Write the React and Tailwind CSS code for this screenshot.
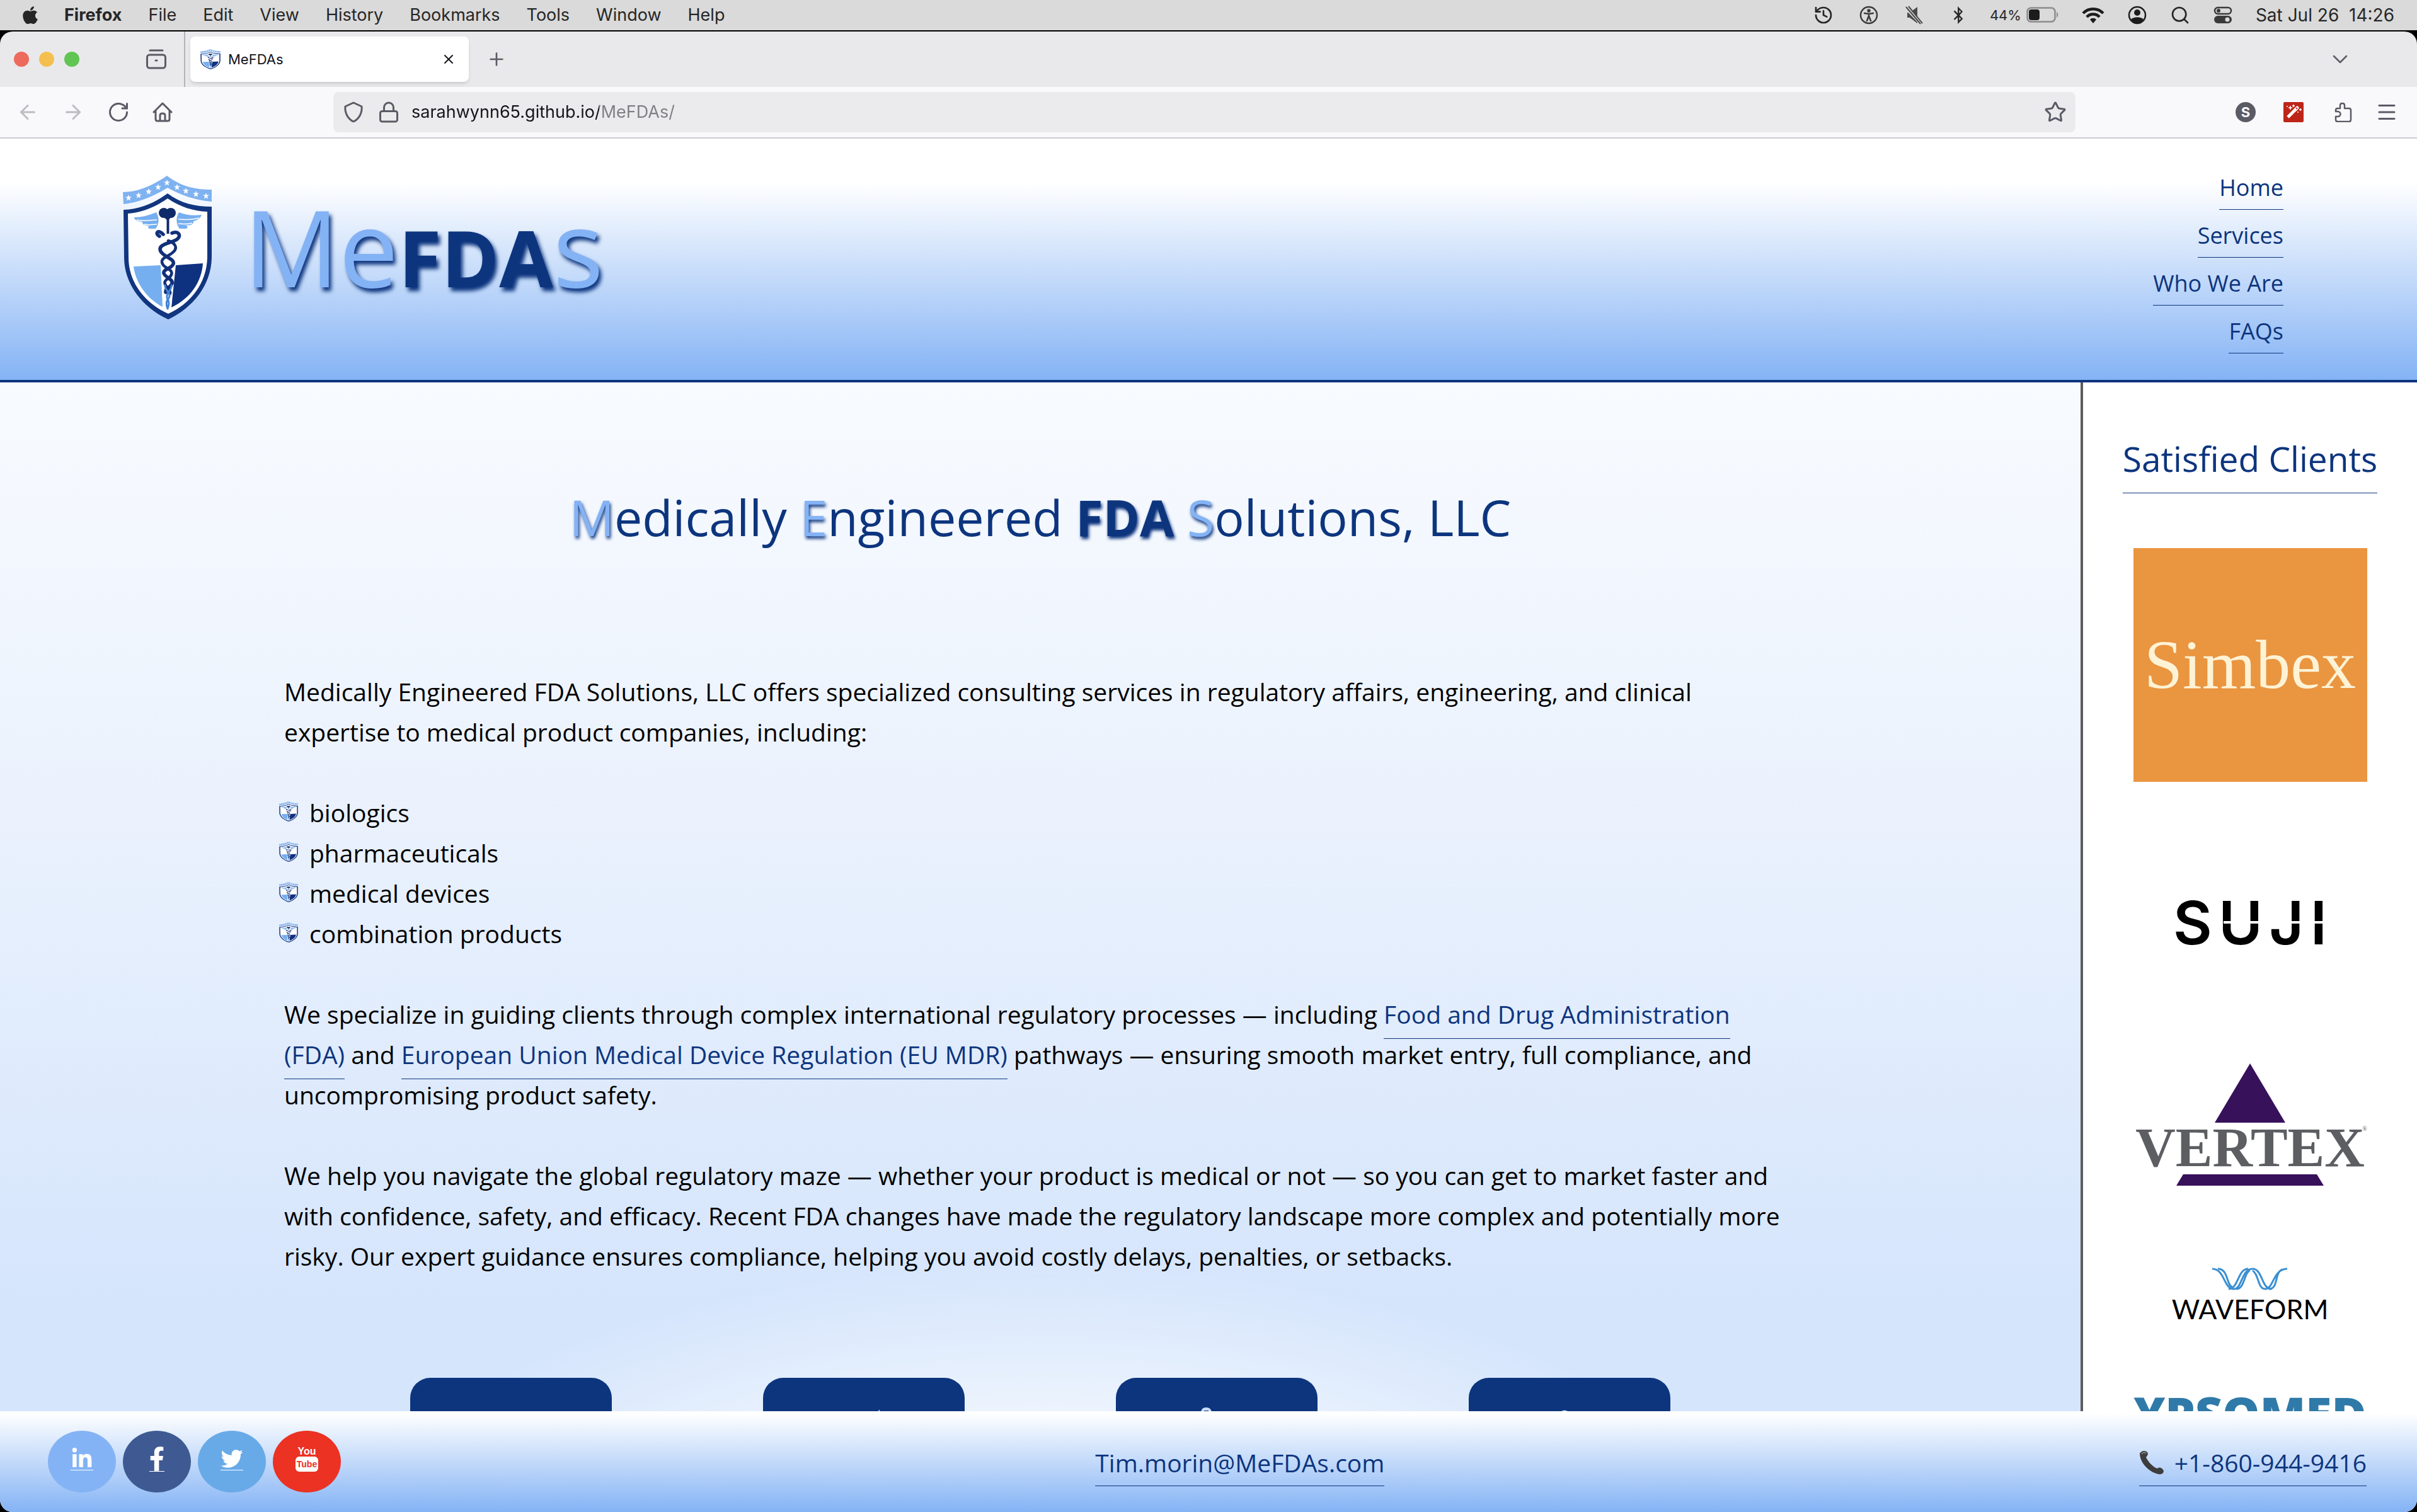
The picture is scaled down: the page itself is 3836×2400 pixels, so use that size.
import React from "react";
import { FaApple, FaLinkedinIn, FaFacebookF, FaTwitter, FaBluetoothB } from "react-icons/fa";
import { History, Search, X, Plus, ChevronDown, ArrowLeft, ArrowRight, RotateCw, Lock, Star, Menu } from "lucide-react";

const STARS = [[9, 35], [25, 31], [41, 25], [56, 18], [70, 11], [86, 18], [100, 24], [116, 29], [132, 32]];

function Crest({ className }) {
  return (
    <svg className={className} viewBox="0 0 142 228" preserveAspectRatio="none" aria-hidden="true">
      <path d="M0 26C25 26 48 15 70 0C92 17 115 22 141 22V41C115 39 90 30 71 19C50 32 25 43 1 45Z" fill="#7fb2f0" />
      {STARS.map(([x, y]) => (
        <path key={x} transform={`translate(${x} ${y})`} d="M0-5L1.3-1.6L5-1.6L2 .8L3.1 4.6L0 2.4L-3.1 4.6L-2 .8L-5-1.6L-1.3-1.6Z" fill="#fff" />
      ))}
      <path d="M1 54C28 53 50 43 71 28C92 44 115 49 141 49V130C140 175 110 210 72 228C32 210 2 172 2 130Z" fill="#12357f" />
      <path d="M8 60C32 58 52 49 71 36C92 50 112 56 134 57V130C133 170 108 203 72 219C36 203 9 170 9 130Z" fill="#fff" />
      <path d="M17 144L60 142L63 208C36 194 20 168 17 144Z" fill="#76aff0" />
      <path d="M84 142L127 139C125 168 108 194 77 209Z" fill="#0f3280" />
      <path d="M18 66C32 66 42 62 53 58C58 66 58 76 52 84H42C39 82 40 79 43 79C34 80 30 76 31 73C24 73 18 70 18 66Z" fill="#76aff0" />
      <path d="M125 62C110 64 100 62 89 58C84 66 84 76 90 84H101C104 81 102 79 99 78C108 80 113 76 112 72C119 71 124 66 125 62Z" fill="#76aff0" />
      <path d="M22 70C36 73 46 70 54 70M34 77C44 79 50 77 54 77M121 67C107 71 96 69 88 69M110 75C100 78 94 76 88 76" stroke="#fff" strokeWidth="1.5" fill="none" />
      <circle cx="65" cy="59" r="8" fill="#0f2a68" />
      <circle cx="76" cy="59" r="8" fill="#0f2a68" />
      <path d="M63 64L71 71L79 64Z" fill="#0f2a68" />
      <path d="M71.500 66V92" stroke="#0f2a68" strokeWidth="4" />
      <path d="M65 208L62 140L70 120L80 140L77 209L71 213Z" fill="#fff" />
      <path d="M64 93C56 84 50 92 58 96M78 91C88 86 96 97 82 103C70 108 55 110 60 120C66 130 83 132 80 140C77 148 63 148 65 155C68 162 80 164 78 171C75 178 67 178 68 185" stroke="#12307a" strokeWidth="5.500" fill="none" strokeLinecap="round" />
      <path d="M72 103C82 106 88 114 80 121C72 129 58 130 63 140C67 148 80 148 77 157C74 164 64 165 67 172C69 178 76 180 75 187" stroke="#12307a" strokeWidth="4.500" fill="none" strokeLinecap="round" />
      <path d="M67 174C66 182 78 186 73 194C68 199 68 204 71 211M77 174C78 182 66 188 71 196C74 200 73 206 71 211" stroke="#3f83d6" strokeWidth="3" fill="none" strokeLinecap="round" />
    </svg>
  );
}

function MenuBar() {
  const items = ["File", "Edit", "View", "History", "Bookmarks", "Tools", "Window", "Help"];
  return (
    <div className="flex h-12 shrink-0 items-center justify-between bg-[#dadada] pr-9 pl-8 text-[27px] text-[#262626]">
      <div className="flex items-center gap-[42px]">
        <FaApple className="size-8 shrink-0" />
        <button className="-ml-1 font-bold">Firefox</button>
        {items.map((t) => (
          <button key={t}>{t}</button>
        ))}
      </div>
      <div className="flex items-center">
        <History className="mr-10 size-8" />
        <svg className="mr-10 size-8" viewBox="0 0 32 32" fill="none" stroke="#3a3a3a" strokeWidth="2.500" strokeLinecap="round">
          <circle cx="16" cy="16" r="13" />
          <circle cx="16" cy="9" r="1.500" fill="#3a3a3a" />
          <path d="M9 13L16 14L23 13M16 14V18M16 17L13 25M16 17L19 25" />
        </svg>
        <svg className="mr-10 size-8" viewBox="0 0 32 32" fill="#4a4a4a">
          <path d="M5 12H9L21 3V29L9 20H5Z" />
          <path d="M2 3L29 31" stroke="#dadada" strokeWidth="6" />
          <path d="M3 3L26 30M7 2L29 29" stroke="#4a4a4a" strokeWidth="2" />
        </svg>
        <FaBluetoothB className="mr-9 size-7" />
        <span className="mr-2 text-[22px]">44%</span>
        <svg className="mr-9 h-7 w-[52px]" viewBox="0 0 52 28">
          <rect x="1.500" y="2.500" width="44" height="22" rx="6" fill="none" stroke="#8c8c8c" strokeWidth="2.500" />
          <rect x="4" y="5" width="17" height="17" rx="4" fill="#1c1c1c" />
          <path d="M48 9V18C51 17 51 10 48 9Z" fill="#8c8c8c" />
        </svg>
        <svg className="mr-9 h-7 w-9" viewBox="0 0 36 28" fill="none" stroke="#1c1c1c" strokeWidth="4.500">
          <path d="M2 11C11 2 25 2 34 11" />
          <path d="M8 17C13 11 23 11 28 17" />
          <path d="M13 21C16 18 20 18 23 21L18 27Z" fill="#1c1c1c" stroke="none" />
        </svg>
        <svg className="mr-9 size-8" viewBox="0 0 32 32">
          <circle cx="16" cy="16" r="13" fill="none" stroke="#1c1c1c" strokeWidth="2.500" />
          <circle cx="16" cy="12" r="5" fill="#1c1c1c" />
          <path d="M6 23C10 18 22 18 26 23C22 30 10 30 6 23Z" fill="#1c1c1c" />
        </svg>
        <Search className="mr-9 size-8" />
        <svg className="mr-9 size-8" viewBox="0 0 32 32">
          <rect x="3" y="4" width="26" height="10" rx="5" fill="none" stroke="#3a3a3a" strokeWidth="2.500" />
          <circle cx="9" cy="9" r="3" fill="#3a3a3a" />
          <rect x="2" y="17" width="28" height="12" rx="6" fill="#3a3a3a" />
          <circle cx="23" cy="23" r="3.500" fill="#dadada" />
        </svg>
        <span className="text-[28px] whitespace-pre">Sat Jul 26  14:26</span>
      </div>
    </div>
  );
}

function TabBar() {
  return (
    <div className="flex h-22 items-center rounded-t-[20px] bg-[#e9e9eb] pl-[22px]">
      <div className="flex gap-4">
        <button aria-label="Close window" className="size-6 rounded-full bg-[#ed6a5e]" />
        <button aria-label="Minimise window" className="size-6 rounded-full bg-[#f5bf4f]" />
        <button aria-label="Zoom window" className="size-6 rounded-full bg-[#61c554]" />
      </div>
      <button aria-label="Recent browsing" className="ml-[104px]">
        <svg className="h-8 w-9" viewBox="0 0 36 32" fill="none" stroke="#5b5b66" strokeWidth="3" strokeLinecap="round">
          <rect x="3.500" y="9" width="29" height="21" rx="4" />
          <path d="M8 2H28M17 18H19" />
        </svg>
      </button>
      <div className="ml-[26px] h-full w-0.5 bg-[#b4b4b8]" />
      <div className="ml-2 flex h-[72px] w-[442px] items-center rounded-lg bg-white pr-5 pl-4 shadow-md">
        <Crest className="h-8 w-8" />
        <span className="ml-3 flex-1 text-[22px] text-[#15141a]">MeFDAs</span>
        <button aria-label="Close tab">
          <X className="size-6 text-[#15141a]" />
        </button>
      </div>
      <button aria-label="New tab" className="ml-7">
        <Plus className="size-8 text-[#5b5b66]" strokeWidth={2} />
      </button>
      <button aria-label="List all tabs" className="mr-[102px] ml-auto">
        <ChevronDown className="size-10 text-[#5b5b66]" strokeWidth={1.5} />
      </button>
    </div>
  );
}

function Toolbar() {
  return (
    <div className="flex h-[82px] items-center border-b-2 border-[#ccccd0] bg-[#f9f9fb] pr-[30px] pl-[26px] text-[#5b5b66]">
      <button aria-label="Back"><ArrowLeft className="size-9 text-[#bdbdc1]" strokeWidth={2} /></button>
      <button aria-label="Forward" className="ml-9"><ArrowRight className="size-9 text-[#bdbdc1]" strokeWidth={2} /></button>
      <button aria-label="Reload" className="ml-9"><RotateCw className="size-9" strokeWidth={2} /></button>
      <button aria-label="Home" className="ml-[34px]">
        <svg className="size-9" viewBox="0 0 36 36" fill="none" stroke="currentColor" strokeWidth="3" strokeLinejoin="round" strokeLinecap="round">
          <path d="M4 18L18 4L32 18M7 16V29Q7 32 10 32H26Q29 32 29 29V16M14 32V23Q14 20 18 20Q22 20 22 23V32" />
        </svg>
      </button>
      <div className="ml-[253px] flex h-16 flex-1 items-center rounded-lg bg-[#ebebed] pr-3.5 pl-3.5">
        <svg className="size-9" viewBox="0 0 36 36" fill="none" stroke="currentColor" strokeWidth="3" strokeLinejoin="round">
          <path d="M18 3L31 9C32 19 27 29 18 33C9 29 4 19 5 9Z" />
        </svg>
        <Lock className="ml-5 size-9" strokeWidth={2} />
        <input
          aria-label="Address"
          defaultValue="sarahwynn65.github.io/MeFDAs/"
          className="ml-[18px] min-w-0 flex-1 bg-[linear-gradient(to_right,#15141a_298px,#7f7f83_298px)] bg-clip-text text-[27px] text-transparent outline-none"
        />
        <button aria-label="Bookmark this page"><Star className="size-9" strokeWidth={2} /></button>
      </div>
      <button aria-label="Account" className="ml-[254px] grid size-8 place-items-center rounded-full bg-[#5b5b66] text-[22px] font-bold text-[#f9f9fb]">S</button>
      <button aria-label="Wand" className="ml-11 rounded-xs bg-[#bd2519]">
        <svg className="size-8" viewBox="0 0 32 32" fill="none" stroke="#fff">
          <path d="M7 24L21 10" strokeWidth="5" strokeLinecap="butt" />
          <path d="M19 12L22 9" strokeWidth="5" strokeLinecap="round" />
          <path d="M20 11L22 9" stroke="#bd2519" strokeWidth="2" />
          <path d="M11 6V12M8 9H14M16 4V8M14 6H18M27 10V14M25 12H29M6 6V8M23 15V17" strokeWidth="1.500" />
        </svg>
      </button>
      <button aria-label="Extensions" className="ml-[46px]">
        <svg className="size-8" viewBox="0 0 32 32" fill="none" stroke="currentColor" strokeWidth="2.500" strokeLinejoin="round">
          <path d="M12 10V5C12 1 19 1 19 5V10H26Q29 10 29 13V28Q29 31 26 31H8Q5 31 5 28V23H8C14 23 14 15 8 15H5V13Q5 10 8 10Z" />
        </svg>
      </button>
      <button aria-label="Open menu" className="ml-9"><Menu className="size-9" strokeWidth={2} /></button>
    </div>
  );
}

const LINK = "border-b border-[#0d357e] text-[#0d357e]";
const GLOW = "text-[#84b3f5] [text-shadow:2px_4px_5px_#0d357e]";

function SiteHeader() {
  return (
    <header className="flex h-[387px] shrink-0 justify-between border-b-4 border-[#0d357e] bg-[linear-gradient(#ffffff_18%,#84b3f5)] pr-[212px] pl-[195px]">
      <a href="#home" className="mt-[59px] flex items-start gap-[50px]">
        <Crest className="h-[228px] w-[142px]" />
        <span className="text-[168px] leading-[224px] whitespace-nowrap text-[#84b3f5] [text-shadow:4px_6px_6px_#0d357e]">
          Me<b className="text-[124px] text-[#0d357e]">FDA</b>s
        </span>
      </a>
      <nav className="mt-12 flex flex-col items-end gap-[11px] text-[36px]">
        {["Home", "Services", "Who We Are", "FAQs"].map((t) => (
          <a key={t} href="#nav" className={`${LINK} pb-1 leading-[60px]`}>{t}</a>
        ))}
      </nav>
    </header>
  );
}

const CARD_ICONS = [
  null,
  <path key="pen" d="M184 50L190 62L208 140L160 140Z" />,
  <path key="clip" fillRule="evenodd" d="M135 56Q135 47 143 47Q152 47 152 56V62H200V160H112V62H135ZM140 52V62H147V52Z" />,
  <path key="search" d="M147 53Q152 50 157 53L200 90V160H112V90Z" />,
];

function Intro() {
  return (
    <main className="flex flex-1 flex-col items-center overflow-hidden bg-[linear-gradient(#f8fbff,#ebf2fd_40%,#d5e5fc_90%)]">
      <h1 className="mt-[159px] text-[79px] leading-[110px] whitespace-nowrap text-[#0d357e]">
        <span className={GLOW}>M</span>edically <span className={GLOW}>E</span>ngineered{" "}
        <b className="[text-shadow:2px_4px_5px_#0d357e]">FDA</b> <span className={GLOW}>S</span>olutions, LLC
      </h1>
      <div className="mt-[190px] w-[2400px] max-w-full text-[39px] leading-16 text-black">
        <p>
          Medically Engineered FDA Solutions, LLC offers specialized consulting services in regulatory affairs, engineering, and clinical
          <br />
          expertise to medical product companies, including:
        </p>
        <ul className="my-16 -ml-2">
          {["biologics", "pharmaceuticals", "medical devices", "combination products"].map((t) => (
            <li key={t} className="flex items-center gap-[18px]">
              <Crest className="-mt-1 h-8 w-[30px]" />
              {t}
            </li>
          ))}
        </ul>
        <p>
          We specialize in guiding clients through complex international regulatory processes — including{" "}
          <a href="#fda" className={`${LINK} pb-3`}>Food and Drug Administration<br />(FDA)</a> and{" "}
          <a href="#mdr" className={`${LINK} pb-3`}>European Union Medical Device Regulation (EU MDR)</a> pathways — ensuring smooth market entry, full compliance, and
          <br />
          uncompromising product safety.
        </p>
        <p className="mt-16">
          We help you navigate the global regulatory maze — whether your product is medical or not — so you can get to market faster and
          <br />
          with confidence, safety, and efficacy. Recent FDA changes have made the regulatory landscape more complex and potentially more
          <br />
          risky. Our expert guidance ensures compliance, helping you avoid costly delays, penalties, or setbacks.
        </p>
      </div>
      <div className="-mt-6 flex h-[1150px] w-[2400px] max-w-full shrink-0 justify-center gap-60 bg-[radial-gradient(closest-side,#ffffff_25%,#ffffff00)] pt-[185px]">
        {CARD_ICONS.map((icon, i) => (
          <div key={i} className="h-80 w-80 rounded-[32px] bg-[#0d357e]">
            <svg className="size-80" viewBox="0 0 320 320" fill="#c9dcf8">{icon}</svg>
          </div>
        ))}
      </div>
    </main>
  );
}

function Clients() {
  return (
    <aside className="flex w-[534px] shrink-0 flex-col items-center overflow-hidden border-l-4 border-[#5c5c5c] bg-white">
      <h2 className={`${LINK} mt-[75px] pb-2 text-[55px] leading-[92px] whitespace-nowrap`}>Satisfied Clients</h2>
      <div className="mt-[87px] grid size-[371px] shrink-0 place-items-center bg-[#ea9540] font-['Liberation_Serif'] text-[110px] text-[#fff3d6]">Simbex</div>
      <div className="relative mt-[169px] flex w-[244px] justify-between font-['Inter'] text-[95px] leading-[110px] font-semibold text-black">
        <span>S</span><span>U</span><span>J</span><span>I</span>
        <div className="absolute top-13 right-0 h-1 w-[164px] bg-white" />
      </div>
      <div className="mt-[168px] flex flex-col items-center">
        <svg className="h-[94px] w-28" viewBox="0 0 112 94"><path d="M56 0L112 94H0Z" fill="#37115a" /></svg>
        <div className="relative font-['Liberation_Serif'] text-[88px] leading-20 font-bold text-[#5d5e62]">
          VERTEX
          <span className="absolute top-1 -right-1 text-[10px] leading-3 font-normal">®</span>
        </div>
        <svg className="mt-0.5 h-[18px] w-[234px]" viewBox="0 0 234 18"><path d="M11 0H223L234 18H0Z" fill="#37115a" /></svg>
      </div>
      <div className="mt-[130px] flex flex-col items-center">
        <svg className="h-9 w-[120px]" viewBox="0 0 120 36" fill="none" stroke="#3a8fd2" strokeWidth="3">
          <path d="M0 2C20 2 18 34 34 34C48 34 46 2 64 2C80 2 78 34 94 34" />
          <path d="M9 2C26 2 22 28 32 31M26 34C42 34 40 2 57 2M38 34C52 34 50 8 60 4M64 5C74 10 72 34 84 34C98 34 96 2 119 2M90 34C106 34 98 6 112 3" />
        </svg>
        <div className="mt-1.5 font-['Lato'] text-[43px] leading-12 text-black">WAVEFORM</div>
      </div>
      <div className="mt-[101px] text-[75px] leading-20 font-extrabold text-[#2f7aa8]">YPSOMED</div>
    </aside>
  );
}

function SiteFooter() {
  const round = "grid h-[98px] w-[108px] place-items-center rounded-[50%] text-white";
  return (
    <footer className="flex h-40 shrink-0 items-center justify-between bg-[linear-gradient(#ffffff_2%,#84b3f5)] pr-20 pl-[76px] text-[39px]">
      <div className="flex gap-[11px]">
        <a href="#linkedin" aria-label="LinkedIn" className={`${round} bg-[#84b3f5]`}><FaLinkedinIn className="mb-2 size-9 border-b border-white" /></a>
        <a href="#facebook" aria-label="Facebook" className={`${round} bg-[#3f5a92]`}><FaFacebookF className="mb-2 h-10 w-6 border-b border-white" /></a>
        <a href="#twitter" aria-label="Twitter" className={`${round} bg-[#68aae7]`}><FaTwitter className="mb-2 size-9 border-b border-white" /></a>
        <a href="#youtube" className={`${round} bg-[#eb3223]`}>
          <span className="mb-2 flex flex-col items-center font-['Liberation_Sans'] text-[16px] leading-4 font-bold">
            You
            <span className="rounded-md bg-white px-0.5 py-1 text-[14px] text-[#eb3223]">Tube</span>
          </span>
        </a>
      </div>
      <a href="#mail" className={`${LINK} pt-1 leading-[72px]`}>Tim.morin@MeFDAs.com</a>
      <a href="#tel" className={`${LINK} flex items-center gap-4 pt-1 leading-[72px]`}>
        <svg className="size-10" viewBox="0 0 40 40">
          <path d="M1 5C4 0 10 0 13 3C15 6 13 9 11 11C14 18 21 26 29 29C32 26 36 28 38 31C41 35 36 39 31 38C16 35 1 20 1 5Z" fill="#3d3d3d" />
          <path d="M4 6C6 3 9 3 11 5" stroke="#858585" strokeWidth="2" fill="none" />
        </svg>
        +1-860-944-9416
      </a>
    </footer>
  );
}

export default function App() {
  return (
    <div className="flex h-screen flex-col overflow-hidden bg-black font-['Inter',sans-serif]">
      <MenuBar />
      <div className="mt-0.5 shrink-0">
        <TabBar />
        <Toolbar />
      </div>
      <div className="flex min-h-0 flex-1 flex-col overflow-hidden rounded-b-[20px] bg-white font-['Open_Sans',sans-serif]">
        <SiteHeader />
        <div className="flex min-h-0 flex-1">
          <Intro />
          <Clients />
        </div>
        <SiteFooter />
      </div>
    </div>
  );
}
